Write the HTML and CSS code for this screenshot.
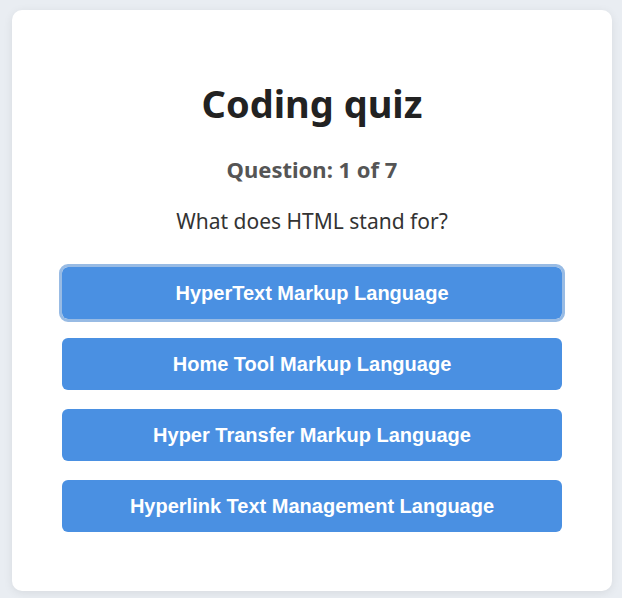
FILE: index.html
```html
<!DOCTYPE html>
<html lang="en">
<head>
<meta charset="utf-8">
<title>Coding quiz</title>
<link rel="stylesheet" href="styles.css">
</head>
<body>
<main class="card">
  <h1 class="title">Coding quiz</h1>
  <p class="counter">Question: 1 of 7</p>
  <p class="question">What does HTML stand for?</p>
  <div class="answers">
    <button class="answer is-focused">HyperText Markup Language</button>
    <button class="answer">Home Tool Markup Language</button>
    <button class="answer">Hyper Transfer Markup Language</button>
    <button class="answer">Hyperlink Text Management Language</button>
  </div>
</main>
</body>
</html>
```
FILE: styles.css
```css
html, body {
  margin: 0;
  padding: 0;
}
body {
  background: #e9edf2;
  font-family: "Noto Sans", "Open Sans", sans-serif;
  padding: 10px 10px 7px 12px;
}
.card {
  box-sizing: border-box;
  width: 600px;
  height: 581px;
  background: #ffffff;
  border-radius: 10px;
  box-shadow: 0 2px 10px rgba(0, 0, 0, 0.08);
  padding: 40px 50px;
  text-align: center;
}
.title {
  margin: 28px 0 0;
  font-size: 38px;
  font-weight: 700;
  color: #222222;
  line-height: 50px;
}
.counter {
  margin: 27px 0 0;
  font-size: 22px;
  font-weight: 700;
  color: #555555;
  line-height: 28px;
}
.question {
  margin: 24px 0 0;
  font-size: 21px;
  color: #333333;
  line-height: 28px;
}
.answers {
  margin-top: 32px;
  display: flex;
  flex-direction: column;
  gap: 19px;
}
.answer {
  height: 52px;
  border: none;
  border-radius: 6px;
  background: #4a90e2;
  color: #ffffff;
  font-family: "Liberation Sans", Arial, sans-serif;
  font-weight: 700;
  font-size: 20px;
  cursor: pointer;
}
.answer.is-focused {
  outline: 3px solid #98bbe4;
  outline-offset: 0;
}
```
